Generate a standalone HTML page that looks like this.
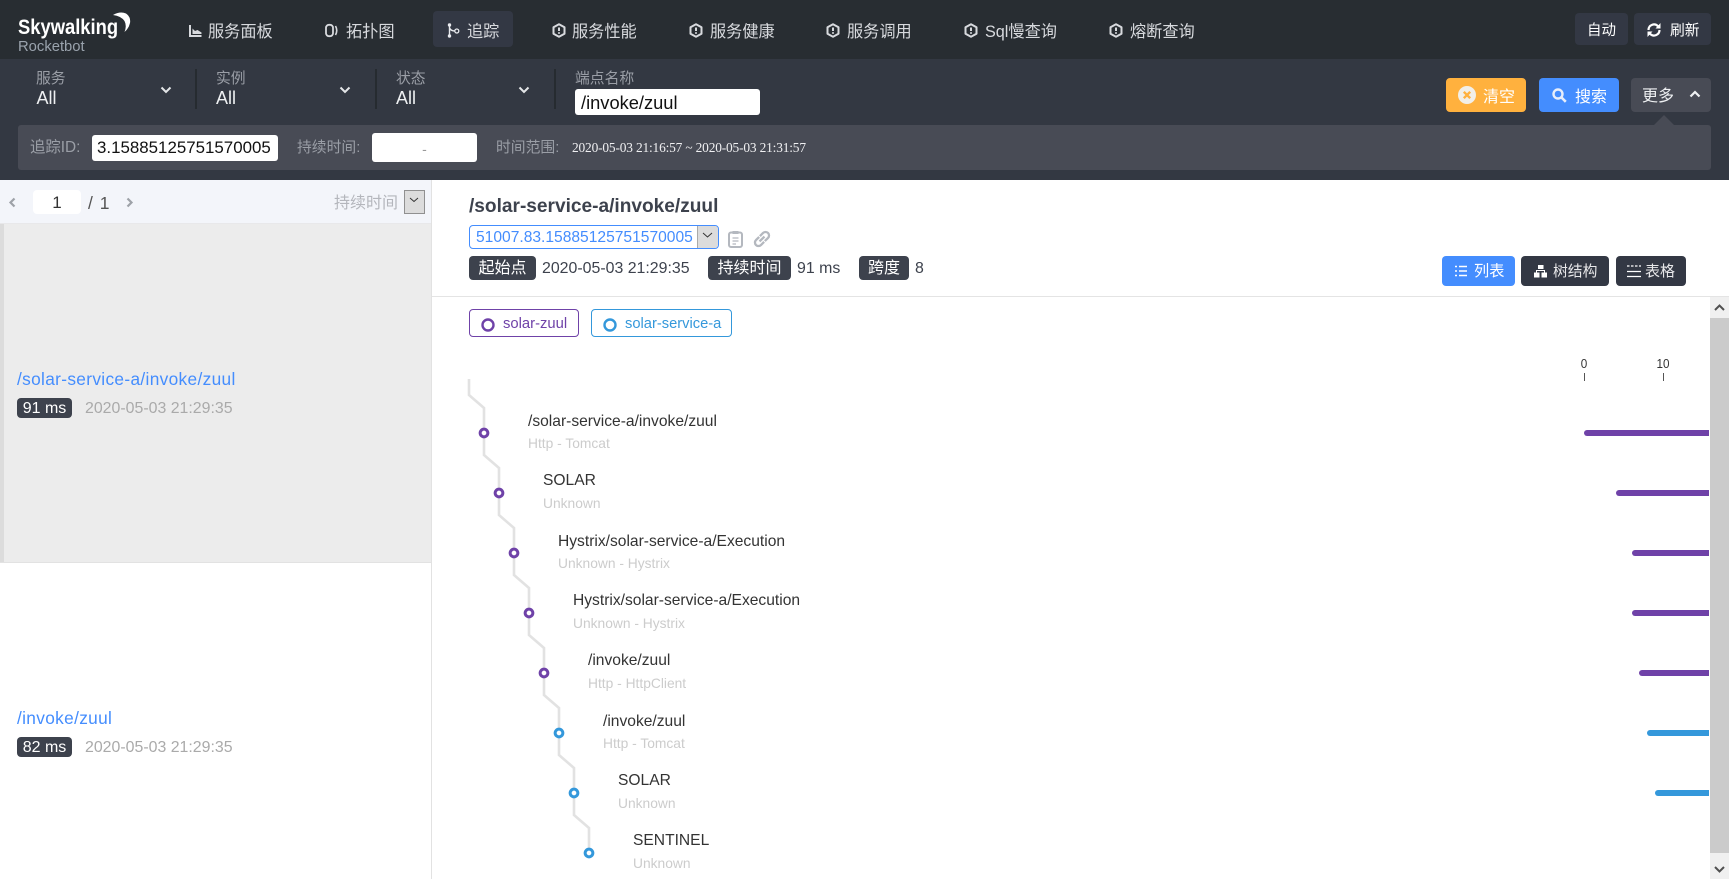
<!DOCTYPE html>
<html lang="zh">
<head>
<meta charset="utf-8">
<title>Rocketbot</title>
<style>
html,body{margin:0;padding:0;width:1729px;height:879px;overflow:hidden;background:#fff}
body{position:relative;font-family:"Liberation Sans","Noto Sans CJK SC",sans-serif}
.a{position:absolute}
.t{position:absolute;white-space:nowrap;line-height:20px}
.nav{color:#d8dade;font-size:16.2px}
.lab{color:#9a9ea6;font-size:14.8px}
.all{color:#eef0f2;font-size:18px}
.btn{position:absolute;border-radius:4px}
.tag{position:absolute;background:#3d424d;border-radius:4px;color:#fff;text-align:center;font-size:16px}
.lbl{color:#333;font-size:15.6px}
.sub{color:#ccc;font-size:13.8px}
.bar{position:absolute;height:6px;border-radius:3px 0 0 3px}
svg{position:absolute;overflow:visible}
</style>
</head>
<body>
<!-- top nav -->
<div class="a" style="left:0;top:0;width:1729px;height:59px;background:#282d32"></div>
<div class="t" style="left:18px;top:16px;color:#fff;font-size:21px;font-weight:bold;transform:scaleX(.875);transform-origin:0 50%;line-height:24px">Skywalking</div>
<svg style="left:0;top:0" width="140" height="40"><path d="M113 15Q120 11 126 13.500Q131 17 130 23Q129 28 124.500 32Q127 26 124.500 21Q121 16 113 15Z" fill="#fff"/></svg>
<div class="t" style="left:18px;top:37px;color:#9aa3ad;font-size:14.8px">Rocketbot</div>
<div class="a" style="left:433px;top:11px;width:80px;height:36px;background:#333844;border-radius:4px"></div>

<svg style="left:189px;top:25px" width="13" height="12"><path d="M1 0V11H12.500" fill="none" stroke="#d8dade" stroke-width="2"/><path d="M3.500 9V3.500L6 6L8.500 5L12.500 7.500V9Z" fill="#d8dade"/></svg>
<div class="t nav" style="left:208px;top:22px">服务面板</div>
<svg style="left:325px;top:24px" width="14" height="13"><rect x="1" y=".8" width="7" height="11.400" rx="3" fill="none" stroke="#d8dade" stroke-width="1.800"/><path d="M10.500 2Q13 6.500 10.500 11" fill="none" stroke="#d8dade" stroke-width="1.600"/></svg>
<div class="t nav" style="left:346px;top:22px">拓扑图</div>
<svg style="left:447px;top:23px" width="13" height="15"><path d="M2.500 2V13M2.500 5Q4 8 8 8" fill="none" stroke="#e8eaee" stroke-width="1.400"/><circle cx="2.500" cy="2" r="1.700" fill="#e8eaee"/><circle cx="2.500" cy="13" r="1.700" fill="#e8eaee"/><circle cx="9.800" cy="8" r="2" fill="none" stroke="#e8eaee" stroke-width="1.300"/></svg>
<div class="t nav" style="left:467px;top:22px">追踪</div>

<svg style="left:552px;top:23px" width="14" height="15"><path d="M7 1.300L12.500 4.300V10.700L7 13.700L1.500 10.700V4.300Z" fill="none" stroke="#d8dade" stroke-width="2" stroke-linejoin="round"/><path d="M7 4.500V8M7 9.200V10.800" stroke="#d8dade" stroke-width="2"/></svg>
<div class="t nav" style="left:572px;top:22px">服务性能</div>
<svg style="left:689px;top:23px" width="14" height="15"><path d="M7 1.300L12.500 4.300V10.700L7 13.700L1.500 10.700V4.300Z" fill="none" stroke="#d8dade" stroke-width="2" stroke-linejoin="round"/><path d="M7 4.500V8M7 9.200V10.800" stroke="#d8dade" stroke-width="2"/></svg>
<div class="t nav" style="left:710px;top:22px">服务健康</div>
<svg style="left:826px;top:23px" width="14" height="15"><path d="M7 1.300L12.500 4.300V10.700L7 13.700L1.500 10.700V4.300Z" fill="none" stroke="#d8dade" stroke-width="2" stroke-linejoin="round"/><path d="M7 4.500V8M7 9.200V10.800" stroke="#d8dade" stroke-width="2"/></svg>
<div class="t nav" style="left:847px;top:22px">服务调用</div>
<svg style="left:964px;top:23px" width="14" height="15"><path d="M7 1.300L12.500 4.300V10.700L7 13.700L1.500 10.700V4.300Z" fill="none" stroke="#d8dade" stroke-width="2" stroke-linejoin="round"/><path d="M7 4.500V8M7 9.200V10.800" stroke="#d8dade" stroke-width="2"/></svg>
<div class="t nav" style="left:985px;top:22px">Sql慢查询</div>
<svg style="left:1109px;top:23px" width="14" height="15"><path d="M7 1.300L12.500 4.300V10.700L7 13.700L1.500 10.700V4.300Z" fill="none" stroke="#d8dade" stroke-width="2" stroke-linejoin="round"/><path d="M7 4.500V8M7 9.200V10.800" stroke="#d8dade" stroke-width="2"/></svg>
<div class="t nav" style="left:1130px;top:22px">熔断查询</div>

<div class="btn" style="left:1575px;top:13px;width:53px;height:32px;background:#333844"></div>
<div class="t" style="left:1587px;top:21px;color:#fff;font-size:14.5px">自动</div>
<div class="btn" style="left:1634px;top:13px;width:77px;height:32px;background:#333844"></div>
<svg style="left:1646px;top:22px" width="16" height="16"><path d="M2.500 8A5.500 5.500 0 0 1 12 4.200M13.500 8A5.500 5.500 0 0 1 4 11.800" fill="none" stroke="#fff" stroke-width="2.200"/><path d="M14.500 1V6.500H9.500ZM1.500 15V9.500H6.500Z" fill="#fff"/></svg>
<div class="t" style="left:1670px;top:21px;color:#fff;font-size:14.8px">刷新</div>

<!-- filter row -->
<div class="a" style="left:0;top:59px;width:1729px;height:121px;background:#333842"></div>
<div class="t lab" style="left:36px;top:69px">服务</div>
<div class="t all" style="left:36.500px;top:88px">All</div>
<svg style="left:160px;top:86px" width="12" height="8"><path d="M1.500 1.500L6 6L10.500 1.500" fill="none" stroke="#e4e6e8" stroke-width="2"/></svg>
<div class="a" style="left:195px;top:69px;width:2px;height:40px;background:#262b30"></div>
<div class="t lab" style="left:216px;top:69px">实例</div>
<div class="t all" style="left:216px;top:88px">All</div>
<svg style="left:339px;top:86px" width="12" height="8"><path d="M1.500 1.500L6 6L10.500 1.500" fill="none" stroke="#e4e6e8" stroke-width="2"/></svg>
<div class="a" style="left:375px;top:69px;width:2px;height:40px;background:#262b30"></div>
<div class="t lab" style="left:396px;top:69px">状态</div>
<div class="t all" style="left:396px;top:88px">All</div>
<svg style="left:518px;top:86px" width="12" height="8"><path d="M1.500 1.500L6 6L10.500 1.500" fill="none" stroke="#e4e6e8" stroke-width="2"/></svg>
<div class="a" style="left:554px;top:69px;width:2px;height:40px;background:#262b30"></div>
<div class="t lab" style="left:575px;top:69px">端点名称</div>
<div class="a" style="left:575px;top:89px;width:185px;height:26px;background:#fff;border-radius:3px"></div>
<div class="t" style="left:581px;top:93px;color:#111;font-size:18.300px">/invoke/zuul</div>

<div class="btn" style="left:1446px;top:78px;width:80px;height:34px;background:#ffb13e"></div>
<svg style="left:1458px;top:86px" width="18" height="18"><circle cx="9" cy="9" r="9" fill="#f2efe8"/><path d="M5.800 5.800L12.200 12.200M12.200 5.800L5.800 12.200" stroke="#ffb13e" stroke-width="2.400"/></svg>
<div class="t" style="left:1483px;top:88px;color:#fff;font-size:16px">清空</div>
<div class="btn" style="left:1539px;top:78px;width:80px;height:34px;background:#448dfe"></div>
<svg style="left:1552px;top:88px" width="15" height="15"><circle cx="6" cy="6" r="4.500" fill="none" stroke="#e8eefa" stroke-width="2.400"/><path d="M9.500 9.500L13.800 13.800" stroke="#e8eefa" stroke-width="2.600"/></svg>
<div class="t" style="left:1575px;top:88px;color:#fff;font-size:16px">搜索</div>
<div class="btn" style="left:1631px;top:78px;width:80px;height:34px;background:#484b55"></div>
<div class="t" style="left:1642px;top:87px;color:#eef0f2;font-size:16px">更多</div>
<svg style="left:1689px;top:90px" width="12" height="8"><path d="M1.500 6.500L6 2L10.500 6.500" fill="none" stroke="#eef0f2" stroke-width="2.200"/></svg>
<svg style="left:1654px;top:115px" width="20" height="10"><path d="M0 10L10 0L20 10Z" fill="#484b55"/></svg>

<div class="a" style="left:18px;top:125px;width:1693px;height:45px;background:#484b55;border-radius:3px"></div>
<div class="t" style="left:30px;top:138px;color:#9a9ea6;font-size:15.400px">追踪ID:</div>
<div class="a" style="left:92px;top:135px;width:186px;height:26px;background:#fff;border-radius:3px"></div>
<div class="t" style="left:97px;top:138px;color:#111;font-size:16.900px">3.15885125751570005</div>
<div class="t" style="left:297px;top:138px;color:#9a9ea6;font-size:14.800px">持续时间:</div>
<div class="a" style="left:372px;top:133px;width:105px;height:29px;background:#fff;border-radius:3px"></div>
<div class="t" style="left:372px;top:139px;width:105px;text-align:center;color:#999;font-size:14px">-</div>
<div class="t" style="left:496px;top:138px;color:#9a9ea6;font-size:14.800px">时间范围:</div>
<div class="t" style="left:572px;top:138px;color:#f0f0f2;font-size:13.400px;letter-spacing:-.17px;font-family:'Liberation Serif',serif">2020-05-03 21:16:57 ~ 2020-05-03 21:31:57</div>

<!-- sidebar -->
<div class="a" style="left:0;top:180px;width:431px;height:43px;background:#f3f5fa;border-bottom:1px solid #e8e8ea"></div>
<svg style="left:8px;top:197px" width="9" height="11"><path d="M6.500 1.500L2.500 5.500L6.500 9.500" fill="none" stroke="#9ea2a8" stroke-width="2.200"/></svg>
<div class="a" style="left:33px;top:190px;width:48px;height:24px;background:#fff;border-radius:4px"></div>
<div class="t" style="left:33px;top:193px;width:48px;text-align:center;color:#333;font-size:17px">1</div>
<div class="t" style="left:88px;top:193px;color:#555;font-size:17.500px;letter-spacing:1px">/ 1</div>
<svg style="left:125px;top:197px" width="9" height="11"><path d="M2.500 1.500L6.500 5.500L2.500 9.500" fill="none" stroke="#9ea2a8" stroke-width="2.200"/></svg>
<div class="t" style="left:334px;top:194px;color:#b4b6bc;font-size:16px">持续时间</div>
<div class="a" style="left:404px;top:190px;width:19px;height:22px;background:#dcdcdc;border:1px solid #909090"></div>
<svg style="left:409px;top:197px" width="10" height="6"><path d="M1 1L5 4.500L9 1" fill="none" stroke="#333" stroke-width="1"/></svg>

<div class="a" style="left:0;top:224px;width:431px;height:338px;background:#ececec"></div>
<div class="a" style="left:0;top:224px;width:4px;height:338px;background:#dcdcdc"></div>
<div class="a" style="left:0;top:562px;width:431px;height:1px;background:#e2e2e2"></div>
<div class="a" style="left:431px;top:180px;width:1px;height:699px;background:#e2e2e2"></div>

<div class="t" style="left:17px;top:369px;color:#448dfe;font-size:17.300px;letter-spacing:.33px">/solar-service-a/invoke/zuul</div>
<div class="tag" style="left:17px;top:398px;width:55px;height:20px;line-height:21px">91 ms</div>
<div class="t" style="left:85px;top:398.500px;color:#aaa;font-size:15.900px">2020-05-03 21:29:35</div>
<div class="t" style="left:17px;top:708px;color:#448dfe;font-size:17.300px;letter-spacing:.33px">/invoke/zuul</div>
<div class="tag" style="left:17px;top:737px;width:55px;height:20px;line-height:21px">82 ms</div>
<div class="t" style="left:85px;top:737.500px;color:#aaa;font-size:15.900px">2020-05-03 21:29:35</div>

<!-- right header -->
<div class="t" style="left:469px;top:197px;color:#3d424d;font-size:19.100px;font-weight:bold">/solar-service-a/invoke/zuul</div>
<div class="a" style="left:469px;top:225px;width:248px;height:22px;border:1px solid #448dfe;border-radius:4px;overflow:hidden">
  <div class="a" style="right:0;top:0;width:20px;height:22px;background:#dcdcdc;border-left:1px solid #aaa"></div>
</div>
<svg style="left:702px;top:232px" width="11" height="7"><path d="M1 1L5.500 5L10 1" fill="none" stroke="#333" stroke-width="1"/></svg>
<div class="t" style="left:476px;top:228px;color:#448dfe;font-size:15.600px">51007.83.15885125751570005</div>
<svg style="left:728px;top:230px" width="16" height="18"><rect x="1" y="2.500" width="13" height="14.500" rx="2" fill="none" stroke="#b4b8bf" stroke-width="2"/><rect x="4.500" y="1" width="6" height="3" fill="#b4b8bf"/><path d="M4.500 8H10.500M4.500 11H10.500M4.500 14H8" stroke="#b4b8bf" stroke-width="1.300"/></svg>
<svg style="left:753px;top:230px" width="18" height="18"><g transform="rotate(-45 9 9)" fill="none" stroke="#b4b8bf" stroke-width="2.300"><path d="M8.500 5.500H4A3.500 3.500 0 0 0 4 12.500H8.500"/><path d="M9.500 5.500H14A3.500 3.500 0 0 1 14 12.500H9.500"/><path d="M5.500 9H12.500"/></g></svg>

<div class="tag" style="left:469px;top:256px;width:67px;height:24px;line-height:25px">起始点</div>
<div class="t" style="left:542px;top:258.500px;color:#3d424d;font-size:15.900px">2020-05-03 21:29:35</div>
<div class="tag" style="left:708px;top:256px;width:83px;height:24px;line-height:25px">持续时间</div>
<div class="t" style="left:797px;top:258.500px;color:#3d424d;font-size:15.900px">91 ms</div>
<div class="tag" style="left:859px;top:256px;width:50px;height:24px;line-height:25px">跨度</div>
<div class="t" style="left:915px;top:258.500px;color:#3d424d;font-size:15.900px">8</div>

<div class="btn" style="left:1442px;top:256px;width:73px;height:30px;background:#448dfe"></div>
<svg style="left:1455px;top:265px" width="12" height="12"><path d="M0 1.500H2M4 1.500H12M0 6H2M4 6H12M0 10.500H2M4 10.500H12" stroke="#fff" stroke-width="1.500"/></svg>
<div class="t" style="left:1474px;top:262px;color:#fff;font-size:15.200px">列表</div>
<div class="btn" style="left:1521px;top:256px;width:88px;height:30px;background:#333844"></div>
<svg style="left:1534px;top:265px" width="13" height="13"><path d="M4 0H9.500V4H4ZM0 7.500H5.500V12.500H0ZM7.500 7.500H13V12.500H7.500Z" fill="#fff"/><path d="M2.500 7.500V5.500H10.500V7.500" fill="none" stroke="#fff"/></svg>
<div class="t" style="left:1553px;top:262px;color:#e8e8ea;font-size:14.800px">树结构</div>
<div class="btn" style="left:1616px;top:256px;width:70px;height:30px;background:#333844"></div>
<svg style="left:1627px;top:265px" width="14" height="13"><path d="M0 1H2.500M4 1H6.500M8 1H10.500M12 1H14" stroke="#fff" stroke-width="1.300"/><path d="M0 6.500H14M0 11.500H14" stroke="#fff" stroke-width="1.300"/></svg>
<div class="t" style="left:1645px;top:262px;color:#e8e8ea;font-size:15px">表格</div>

<div class="a" style="left:432px;top:296px;width:1297px;height:1px;background:#e4e4e4"></div>

<!-- legend -->
<div class="a" style="left:469px;top:309px;width:108px;height:26px;border:1px solid #6f42a8;border-radius:4px"></div>
<svg style="left:481px;top:318px" width="14" height="14"><circle cx="7" cy="7" r="5.500" fill="none" stroke="#6f42a8" stroke-width="2.400"/></svg>
<div class="t" style="left:503px;top:314px;color:#6f42a8;font-size:14.800px">solar-zuul</div>
<div class="a" style="left:591px;top:309px;width:139px;height:26px;border:1px solid #3498db;border-radius:4px"></div>
<svg style="left:603px;top:318px" width="14" height="14"><circle cx="7" cy="7" r="5.500" fill="none" stroke="#3498db" stroke-width="2.400"/></svg>
<div class="t" style="left:625px;top:314px;color:#3498db;font-size:14.700px">solar-service-a</div>

<!-- axis -->
<div class="t" style="left:1564px;top:354px;width:40px;text-align:center;color:#333;font-size:13px;transform:scaleX(.9)">0</div>
<div class="a" style="left:1584px;top:373px;width:1px;height:8px;background:#555"></div>
<div class="t" style="left:1643px;top:354px;width:40px;text-align:center;color:#333;font-size:13px;transform:scaleX(.9)">10</div>
<div class="a" style="left:1663px;top:373px;width:1px;height:8px;background:#555"></div>

<!-- trace tree -->
<svg style="left:0;top:0" width="1729" height="879">
<path d="M469 379V395L484 408V455L499 468V515L514 528V575L529 588V635L544 648V695L559 708V755L574 768V815L589 828V853" fill="none" stroke="#e2e2e2" stroke-width="2.600"/>
<g fill="#fff" stroke-width="3">
<g stroke="#6f42a8">
<circle cx="484" cy="433" r="3.850"/><circle cx="499" cy="493" r="3.850"/><circle cx="514" cy="553" r="3.850"/><circle cx="529" cy="613" r="3.850"/><circle cx="544" cy="673" r="3.850"/>
</g>
<g stroke="#3498db">
<circle cx="559" cy="733" r="3.850"/><circle cx="574" cy="793" r="3.850"/><circle cx="589" cy="853" r="3.850"/>
</g>
</g>
</svg>

<div class="t lbl" style="left:528px;top:412px">/solar-service-a/invoke/zuul</div>
<div class="t sub" style="left:528px;top:434px">Http - Tomcat</div>
<div class="t lbl" style="left:543px;top:471px">SOLAR</div>
<div class="t sub" style="left:543px;top:494px">Unknown</div>
<div class="t lbl" style="left:558px;top:532px">Hystrix/solar-service-a/Execution</div>
<div class="t sub" style="left:558px;top:554px">Unknown - Hystrix</div>
<div class="t lbl" style="left:573px;top:591px">Hystrix/solar-service-a/Execution</div>
<div class="t sub" style="left:573px;top:614px">Unknown - Hystrix</div>
<div class="t lbl" style="left:588px;top:651px">/invoke/zuul</div>
<div class="t sub" style="left:588px;top:674px">Http - HttpClient</div>
<div class="t lbl" style="left:603px;top:712px">/invoke/zuul</div>
<div class="t sub" style="left:603px;top:734px">Http - Tomcat</div>
<div class="t lbl" style="left:618px;top:771px">SOLAR</div>
<div class="t sub" style="left:618px;top:794px">Unknown</div>
<div class="t lbl" style="left:633px;top:831px">SENTINEL</div>
<div class="t sub" style="left:633px;top:854px">Unknown</div>

<!-- bars -->
<div class="bar" style="left:1584px;top:430px;width:125px;background:#6f42a8"></div>
<div class="bar" style="left:1616px;top:490px;width:93px;background:#6f42a8"></div>
<div class="bar" style="left:1632px;top:550px;width:77px;background:#6f42a8"></div>
<div class="bar" style="left:1632px;top:610px;width:77px;background:#6f42a8"></div>
<div class="bar" style="left:1639px;top:670px;width:70px;background:#6f42a8"></div>
<div class="bar" style="left:1647px;top:730px;width:62px;background:#3498db"></div>
<div class="bar" style="left:1655px;top:790px;width:54px;background:#3498db"></div>

<!-- scrollbar -->
<div class="a" style="left:1710px;top:297px;width:19px;height:582px;background:#f0f0f0"></div>
<div class="a" style="left:1710px;top:318px;width:19px;height:535px;background:#cbcbcb"></div>
<svg style="left:1714px;top:304px" width="11" height="7"><path d="M1 6L5.500 1.500L10 6" fill="none" stroke="#505050" stroke-width="2"/></svg>
<svg style="left:1714px;top:866px" width="11" height="7"><path d="M1 1L5.500 5.500L10 1" fill="none" stroke="#505050" stroke-width="2"/></svg>
</body>
</html>
